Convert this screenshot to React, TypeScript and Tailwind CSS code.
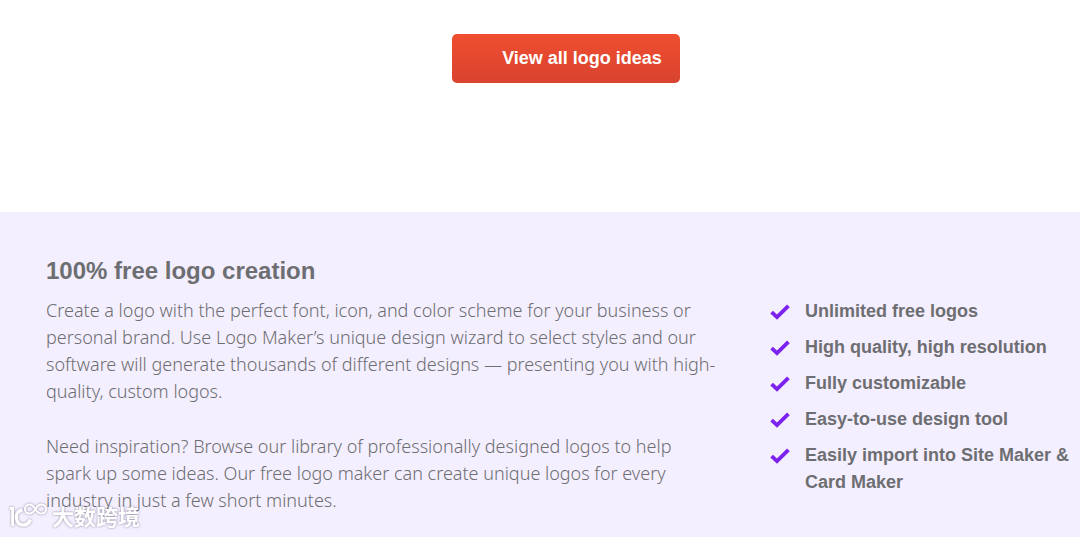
import React from "react";

const paragraphs = [
  "Create a logo with the perfect font, icon, and color scheme for your business or personal brand. Use Logo Maker’s unique design wizard to select styles and our software will generate thousands of different designs — presenting you with high-quality, custom logos.",
  "Need inspiration? Browse our library of professionally designed logos to help spark up some ideas. Our free logo maker can create unique logos for every industry in just a few short minutes.",
];

const features = [
  "Unlimited free logos",
  "High quality, high resolution",
  "Fully customizable",
  "Easy-to-use design tool",
  "Easily import into Site Maker & Card Maker",
];

const CheckMark: React.FC = () => (
  <svg
    viewBox="0 0 20 16"
    className="mt-1.5 h-4 w-5 shrink-0"
    fill="none"
    stroke="#7c22ee"
    strokeWidth="3.8"
    aria-hidden="true"
  >
    <path d="M1.6 8.2 L7 13.2 L18.4 1.8" />
  </svg>
);

const Watermark: React.FC = () => (
  <div className="absolute bottom-1 left-2 flex items-start gap-1 drop-shadow-[0_0_1px_rgba(70,60,90,0.6)]">
    <svg
      viewBox="0 0 40 32"
      className="h-8 w-10"
      fill="none"
      stroke="#ffffff"
      strokeWidth="2.8"
      aria-hidden="true"
    >
      <path d="M1.5 7.5H4.6V25" />
      <path d="M14.5 9C9 10 7.5 14 8.5 18C10 25.5 19 26.5 22.5 18.5" strokeWidth="3.4" />
      <path
        d="M27.5 8.5C25.5 4.5 23.5 3.4 21.5 3.4C18.8 3.4 17 5.4 17 8C17 10.6 18.8 12.6 21.5 12.6C23.5 12.6 25.5 11.5 27.5 8C29.5 4.5 31 3.4 33.5 3.4C36.2 3.4 38 5.4 38 8C38 10.6 36.2 12.6 33.5 12.6C31 12.6 29.5 11.5 27.5 8.5Z"
        strokeWidth="2"
      />
    </svg>
    <span className="font-['Noto_Sans_CJK_SC',sans-serif] text-[22px] leading-7 font-bold text-white">
      大数跨境
    </span>
  </div>
);

export default function App() {
  return (
    <main className="relative flex min-h-screen flex-col bg-white font-['Liberation_Sans',Arial,sans-serif] text-[#6d6e71]">
      <section className="flex justify-center pt-[34px] pb-[129px] pl-[52px]">
        <button
          type="button"
          className="h-[49px] cursor-pointer rounded-[5px] bg-linear-to-b from-[#f04e30] to-[#d8432f] pr-[18px] pb-0.5 pl-[50px] text-lg font-bold text-white"
        >
          View all logo ideas
        </button>
      </section>

      <section className="grow bg-[#f4efff] pt-[45px] pb-5 pl-[46px]">
        <h2 className="text-2xl leading-7 font-bold">100% free logo creation</h2>
        <div className="mt-3 grid grid-cols-[1fr_310px] gap-[52px]">
          <div className="flex flex-col gap-7 font-['Noto_Sans',sans-serif] text-lg leading-[27px] font-light">
            {paragraphs.map((text) => (
              <p key={text}>{text}</p>
            ))}
          </div>
          <ul className="mt-px flex flex-col gap-[9px] text-lg leading-[27px] font-bold">
            {features.map((feature) => (
              <li key={feature} className="flex gap-[15px]">
                <CheckMark />
                <span>{feature}</span>
              </li>
            ))}
          </ul>
        </div>
      </section>

      <Watermark />
    </main>
  );
}
